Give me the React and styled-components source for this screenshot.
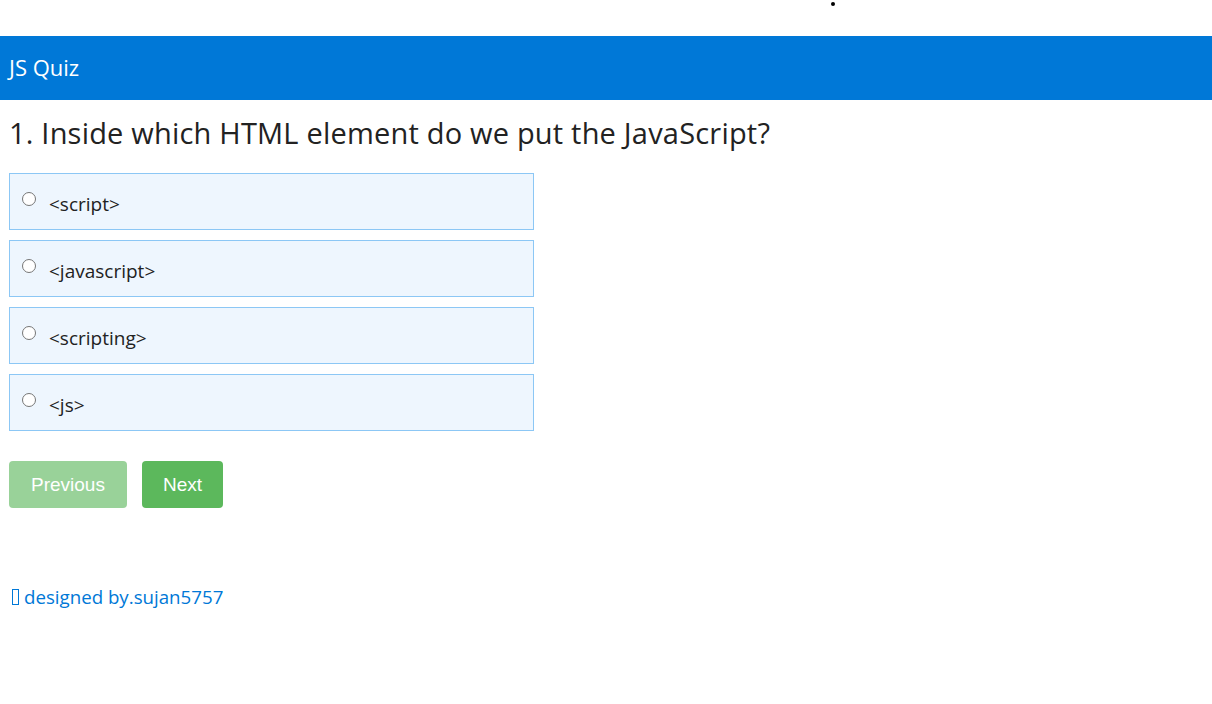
import React from "react";
import styled, { createGlobalStyle } from "styled-components";

const Global = createGlobalStyle`
  html, body { margin: 0; padding: 0; background: #fff; }
  body { font-family: "Open Sans", "Noto Sans", sans-serif; color: #222; }
`;

const TopStrip = styled.div`
  height: 36px;
  display: flex;
  align-items: flex-start;
  padding-left: 831px;
  box-sizing: border-box;
`;

const Dot = styled.span`
  width: 4px;
  height: 4px;
  margin-top: 2px;
  border-radius: 50%;
  background: #000;
`;

const Header = styled.header`
  height: 64px;
  background: #0078d7;
  color: #fff;
  display: flex;
  align-items: center;
  padding-left: 9px;
  padding-bottom: 3px;
  box-sizing: border-box;
  font-size: 22px;
`;

const Main = styled.main`
  padding: 0 9px;
`;

const Question = styled.h2`
  margin: 15px 0 22px;
  font-size: 29px;
  letter-spacing: 0.2px;
  font-weight: 400;
  color: #222;
  line-height: 36px;
`;

const Options = styled.div`
  display: flex;
  flex-direction: column;
  gap: 10px;
  width: 525px;
`;

const Option = styled.label`
  box-sizing: border-box;
  height: 57px;
  border: 1px solid #8cc7f5;
  background: #eef6fe;
  display: flex;
  align-items: center;
  padding-left: 12px;
  padding-top: 4px;
  font-size: 19px;
  color: #222;
`;

const Radio = styled.span`
  width: 14px;
  height: 14px;
  border-radius: 50%;
  border: 1px solid #767676;
  background: #fff;
  box-sizing: border-box;
  margin-right: 13px;
  margin-top: -10px;
  flex: none;
`;

const Buttons = styled.div`
  display: flex;
  gap: 15px;
  margin-top: 30px;
`;

const Button = styled.button`
  height: 47px;
  padding: 0 ${(p) => p.$pad}px;
  border: none;
  border-radius: 4px;
  background: #5cb85c;
  color: #fff;
  font-family: "Liberation Sans", Arial, sans-serif;
  font-size: 19px;
  opacity: ${(p) => (p.$disabled ? 0.62 : 1)};
`;

const Footer = styled.footer`
  margin-top: 76px;
  padding-left: 3px;
  color: #0078d7;
  font-size: 18.7px;
  display: flex;
  align-items: center;
`;

const Tofu = styled.span`
  display: inline-block;
  width: 5px;
  height: 14px;
  border: 1px solid #0078d7;
  margin-right: 5px;
`;

const options = ["<script>", "<javascript>", "<scripting>", "<js>"];

export default function App() {
  return (
    <>
      <Global />
      <TopStrip>
        <Dot />
      </TopStrip>
      <Header>JS Quiz</Header>
      <Main>
        <Question>1. Inside which HTML element do we put the JavaScript?</Question>
        <Options>
          {options.map((o) => (
            <Option key={o}>
              <Radio />
              {o}
            </Option>
          ))}
        </Options>
        <Buttons>
          <Button $disabled $pad={22}>Previous</Button>
          <Button $pad={21}>Next</Button>
        </Buttons>
        <Footer>
          <Tofu />
          designed by.sujan5757
        </Footer>
      </Main>
    </>
  );
}
